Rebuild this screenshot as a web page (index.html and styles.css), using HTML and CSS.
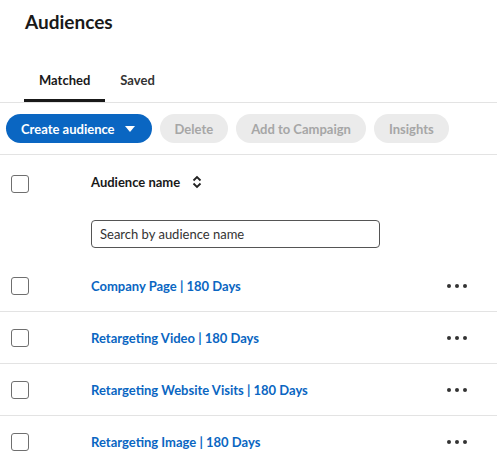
FILE: index.html
```html
<!DOCTYPE html>
<html lang="en">
  <head>
    <meta charset="UTF-8" />
    <title>Audiences</title>
    <link rel="stylesheet" href="styles.css">
  </head>
  <body>
    <h1 class="page-title">Audiences</h1>

    <div class="tabs">
      <span class="tab active">Matched</span>
      <span class="tab">Saved</span>
    </div>

    <div class="toolbar">
      <span class="btn btn-primary">Create audience
        <svg class="caret" width="10" height="6" viewBox="0 0 10 6"><path d="M0 0h10L5 6z" fill="#fff"/></svg>
      </span>
      <span class="btn btn-disabled">Delete</span>
      <span class="btn btn-disabled">Add to Campaign</span>
      <span class="btn btn-disabled">Insights</span>
    </div>

    <div class="list">
      <div class="list-head">
        <span class="check"></span>
        <span class="col-name">Audience name
          <svg class="sort" width="10" height="14" viewBox="0 0 10 14"><path d="M1.5 5.5L5 2l3.5 3.5M1.5 8.5L5 12l3.5-3.5" fill="none" stroke="#222" stroke-width="1.8"/></svg>
        </span>
      </div>
      <div class="list-filter">
        <input class="search" type="text" placeholder="Search by audience name" />
      </div>

      <div class="row">
        <span class="check"></span>
        <a class="name" href="#">Company Page | 180 Days</a>
        <span class="more"><i></i><i></i><i></i></span>
      </div>
      <div class="row">
        <span class="check"></span>
        <a class="name" href="#">Retargeting Video | 180 Days</a>
        <span class="more"><i></i><i></i><i></i></span>
      </div>
      <div class="row">
        <span class="check"></span>
        <a class="name" href="#">Retargeting Website Visits | 180 Days</a>
        <span class="more"><i></i><i></i><i></i></span>
      </div>
      <div class="row">
        <span class="check"></span>
        <a class="name" href="#">Retargeting Image | 180 Days</a>
        <span class="more"><i></i><i></i><i></i></span>
      </div>
    </div>
  </body>
</html>
```

FILE: styles.css
```css
* {
  box-sizing: border-box;
}
body {
  margin: 0;
  font-family: Lato, "Liberation Sans", sans-serif;
  color: #191919;
  background: #fff;
}
.page-title {
  margin: 0;
  padding: 10px 25px 0;
  font-size: 19px;
  line-height: 24px;
  font-weight: 700;
}
.tabs {
  display: flex;
  margin-top: 28px;
  padding-left: 24px;
  border-bottom: 1px solid #e3e3e3;
}
.tab {
  height: 40px;
  line-height: 37px;
  padding: 0 15px;
  font-size: 13px;
  font-weight: 700;
  color: #333;
  border-bottom: 3px solid transparent;
}
.tab.active {
  color: #191919;
  border-bottom-color: #191919;
}
.toolbar {
  display: flex;
  gap: 8px;
  padding: 11px 6px;
  border-bottom: 1px solid #e3e3e3;
}
.btn {
  display: flex;
  align-items: center;
  height: 29px;
  padding: 0 15px;
  border-radius: 15px;
  font-size: 13px;
  font-weight: 700;
}
.btn-primary {
  background: #0a66c2;
  color: #fff;
  padding-right: 17px;
}
.btn-primary .caret {
  margin-left: 10px;
}
.btn-disabled {
  background: #ebebeb;
  color: #a6a6a6;
}
.list-head {
  display: flex;
  align-items: center;
  height: 57px;
  padding-left: 11px;
}
.check {
  width: 18px;
  height: 18px;
  border: 1.5px solid #6f6f6f;
  border-radius: 3px;
  flex: none;
}
.col-name {
  display: flex;
  align-items: center;
  margin-left: 62px;
  margin-bottom: 4px;
  font-size: 13px;
  font-weight: 700;
}
.col-name .sort {
  margin-left: 12px;
}
.list-filter {
  padding: 8px 0 12px 91px;
}
.search {
  display: block;
  width: 289px;
  height: 28px;
  padding: 0 8px;
  border: 1px solid #555;
  border-radius: 4px;
  font-family: inherit;
  font-size: 13px;
  color: #333;
}
.search::placeholder {
  color: #333;
}
.row {
  display: flex;
  align-items: center;
  height: 52px;
  padding-left: 11px;
  border-bottom: 1px solid #e3e3e3;
}
.name {
  margin-left: 62px;
  font-size: 13px;
  font-weight: 700;
  color: #0a66c2;
  text-decoration: none;
}
.more {
  display: flex;
  gap: 4px;
  margin-left: auto;
  margin-right: 30px;
}
.more i {
  width: 4px;
  height: 4px;
  border-radius: 50%;
  background: #333;
}
```
